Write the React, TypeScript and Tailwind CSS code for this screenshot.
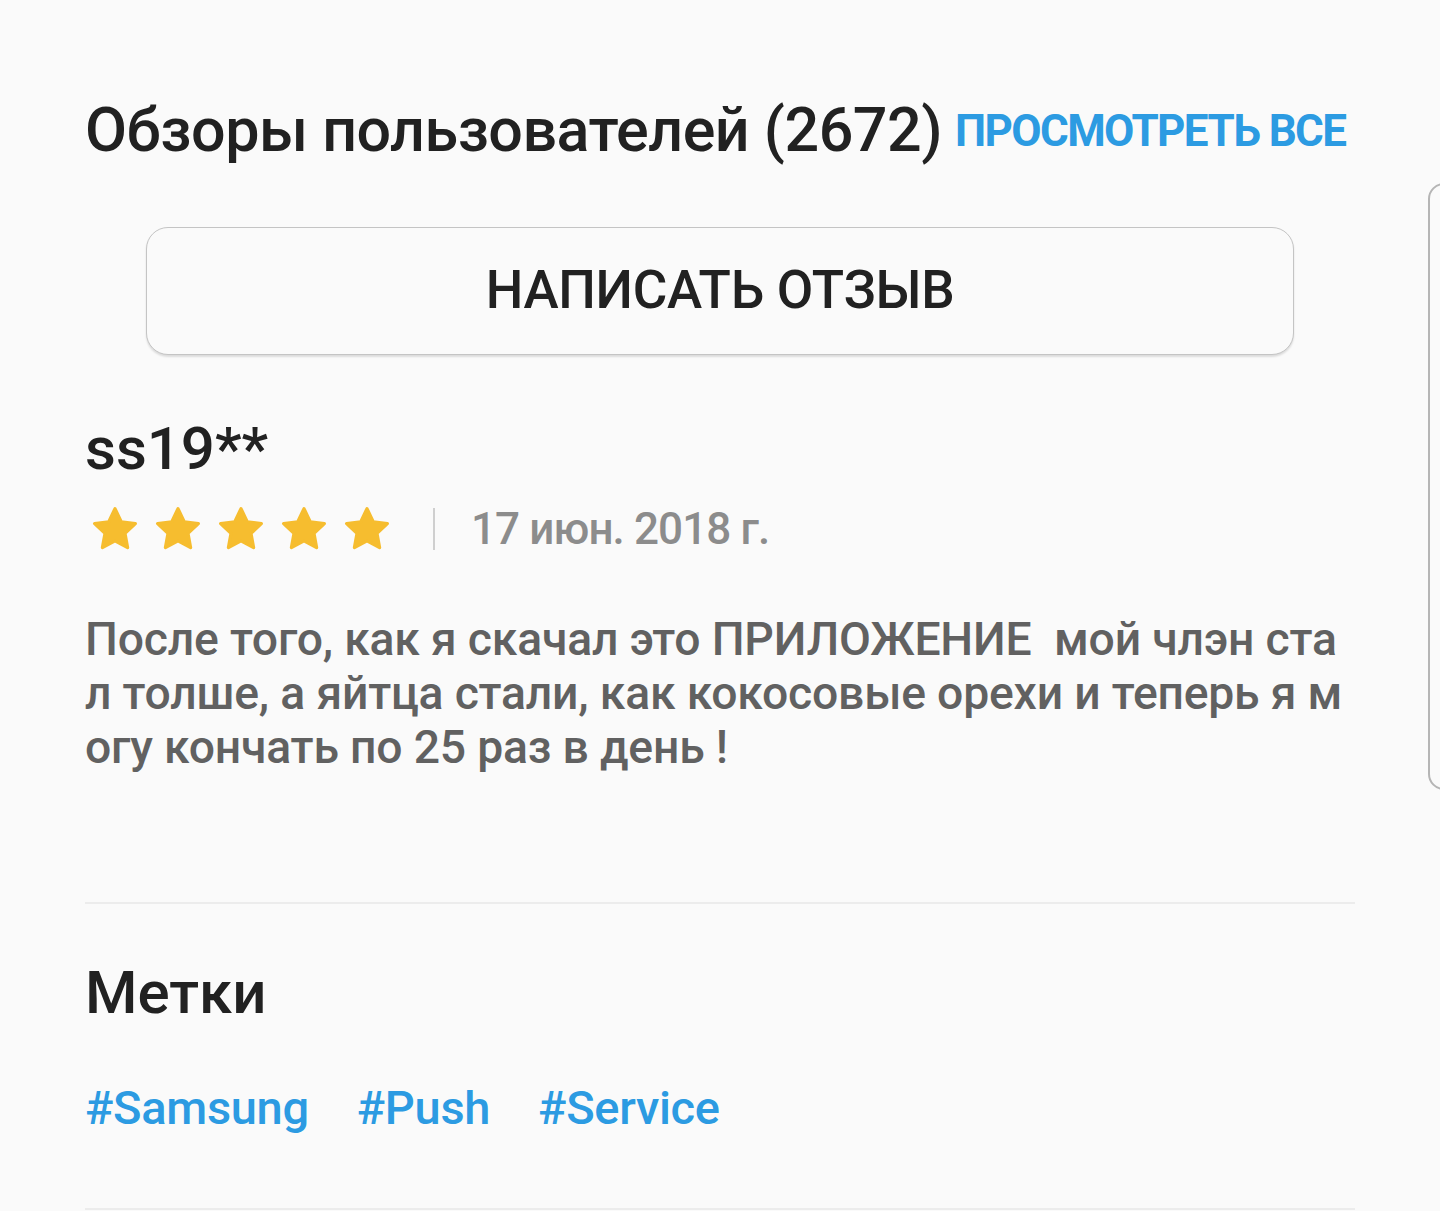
import React from "react";

const Star = () => (
  <svg width="50" height="48" viewBox="0 0 24 24" className="block">
    <path
      d="M12 1.8l3.1 6.6 7.1.9-5.2 4.9 1.3 7.1L12 17.9l-6.3 3.4 1.3-7.1-5.2-4.9 7.1-.9z"
      fill="#f6bd2f"
      stroke="#f6bd2f"
      strokeWidth="1.6"
      strokeLinejoin="round"
    />
  </svg>
);

const tags = ["#Samsung", "#Push", "#Service"];

const App = () => {
  return (
    <div
      className="relative w-[1440px] h-[1211px] overflow-hidden bg-[#fafafa]"
      style={{ fontFamily: "Roboto, 'Noto Sans', sans-serif" }}
    >
      <div className="pl-[85px] pr-[85px] pt-[92px]">
        {/* header */}
        <div className="flex items-start gap-[13px] whitespace-nowrap">
          <h1 className="text-[61px] leading-[76px] font-medium text-[#212121] tracking-[-0.5px]">
            Обзоры пользователей (2672)
          </h1>
          <a className="mt-[1px] text-[44px] leading-[76px] font-bold text-[#2c9be2] tracking-[-1.6px]">
            ПРОСМОТРЕТЬ ВСЕ
          </a>
        </div>

        {/* write review */}
        <div className="mt-[58px] mx-[61px] h-[128px] rounded-[22px] border border-[#c4c4c4] bg-[#fafafa] shadow-[0_2px_2px_rgba(0,0,0,0.12)] flex items-center justify-center">
          <span className="text-[53px] font-medium text-[#212121] tracking-[-0.3px]">
            НАПИСАТЬ ОТЗЫВ
          </span>
        </div>

        {/* review */}
        <div className="mt-[58px]">
          <p className="text-[60px] leading-[72px] font-medium text-[#212121]">
            ss19**
          </p>
          <div className="mt-[19px] flex items-center h-[50px]">
            <div className="flex gap-[13px] pl-[5px]">
              <Star />
              <Star />
              <Star />
              <Star />
              <Star />
            </div>
            <div className="ml-[41px] w-[2px] h-[42px] bg-[#cfcfcf]" />
            <span className="ml-[36px] text-[44px] font-medium text-[#8c8c8c] tracking-[-0.9px]">
              17 июн. 2018 г.
            </span>
          </div>
          <p className="mt-[58px] text-[46.3px] leading-[54px] font-medium text-[#616161] whitespace-nowrap tracking-[-0.2px]">
            <span className="block">
              После того, как я скачал это ПРИЛОЖЕНИЕ&nbsp; мой члэн ста
            </span>
            <span className="block">
              л толше, а яйтца стали, как кокосовые орехи и теперь я м
            </span>
            <span className="block">огу кончать по 25 раз в день !</span>
          </p>
        </div>

        <div className="mt-[128px] h-[2px] bg-[#ececec]" />

        {/* tags */}
        <h2 className="mt-[51px] text-[60px] leading-[76px] font-medium text-[#212121]">
          Метки
        </h2>
        <div className="mt-[47px] flex gap-[48px]">
          {tags.map((t) => (
            <span
              key={t}
              className="text-[47px] leading-[60px] font-medium text-[#2c9be2] tracking-[-0.3px]"
            >
              {t}
            </span>
          ))}
        </div>
        <div className="mt-[70px] h-[2px] bg-[#ececec]" />
      </div>

      {/* side panel edge */}
      <div className="absolute left-[1428px] top-[183px] w-[40px] h-[607px] rounded-l-[16px] border-2 border-[#b5b5b5] bg-[#fafafa]" />
    </div>
  );
};

export default App;
